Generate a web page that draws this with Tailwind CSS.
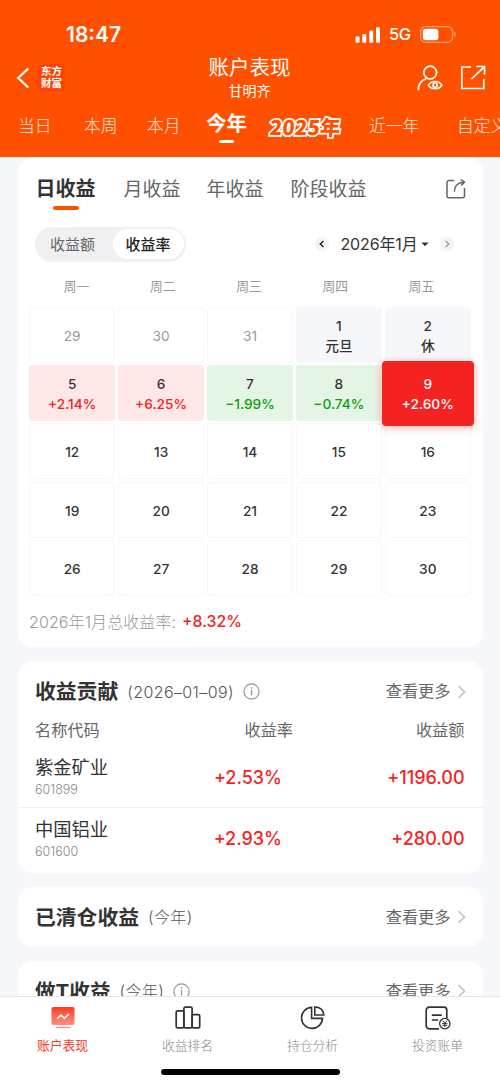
<!DOCTYPE html>
<html lang="zh-CN">
<head>
  <meta charset="UTF-8">
  <meta name="viewport" content="width=device-width, initial-scale=1.0">
  <title>账户表现</title>
  <script src="https://cdn.jsdelivr.net/npm/@tailwindcss/browser@4"></script>
</head>
<body class="w-[500px] h-[1084px] overflow-hidden flex flex-col bg-[#f6f7fa] text-[#333] font-['Inter','Noto_Sans_CJK_SC',sans-serif]">
  <!-- Header -->
  <header class="h-[157px] shrink-0 bg-[#ff5000] text-white overflow-hidden">
    <div class="h-[52px] pt-[17px] pl-[66px] pr-[44px] flex items-center justify-between">
      <span class="text-[21px] leading-[35px] font-semibold">18:47</span>
      <div class="flex items-center">
        <svg class="w-[26px] h-[16px]" viewBox="0 0 26 16" fill="#fff">
          <rect x="0.5" y="9.5" width="4" height="6.2" rx="1"/>
          <rect x="7.3" y="7" width="4" height="8.7" rx="1"/>
          <rect x="14.2" y="3.5" width="4" height="12.2" rx="1"/>
          <rect x="21" y="0.3" width="4" height="15.4" rx="1"/>
        </svg>
        <span class="ml-[8px] w-[24px] text-[16.5px] leading-[35px] font-medium tracking-[-0.5px]">5G</span>
        <svg class="ml-[7px] w-[36px] h-[17px]" viewBox="0 0 36 17">
          <rect x="0.6" y="0.6" width="32" height="15.8" rx="5" fill="none" stroke="#ff9c70" stroke-width="1.2"/>
          <rect x="2.8" y="2.8" width="15.6" height="11.4" rx="3" fill="#fff"/>
          <path d="M34.2 5.8c1.8.8 1.8 4.6 0 5.4z" fill="#ff9c70"/>
        </svg>
      </div>
    </div>
    <div class="h-[51px] pl-[16px] pr-[14px] grid grid-cols-[1fr_100px_1fr] items-center">
      <div class="flex items-center">
        <svg class="w-[14px] h-[22px]" viewBox="0 0 14 22" fill="none" stroke="#fff" stroke-width="2.2"><path d="M12.2 1.5L2.2 11l10 9.5"/></svg>
        <div class="ml-[8px] w-[27px] h-[27px] rounded-[6px] bg-[#ff4206] flex flex-col items-center justify-center text-[10.5px] leading-[11.5px] font-bold">
          <span>东方</span>
          <span>财富</span>
        </div>
      </div>
      <div class="-ml-[3px] text-center whitespace-nowrap">
        <h1 class="text-[20.5px] leading-[26px] font-normal">账户表现</h1>
        <p class="text-[14px] leading-[20px]">甘明齐</p>
      </div>
      <div class="flex items-center justify-end">
        <svg class="w-[26px] h-[26px]" viewBox="0 0 26 26" fill="none" stroke="#fff" stroke-width="1.7">
          <circle cx="13.2" cy="7.6" r="6.4"/>
          <path d="M1.2 25.3c0-6 3.2-10 8-11.6"/>
          <path d="M11.3 20.2c3.4-5 10.3-5 13.6 0c-3.3 4.7-10.2 4.7-13.6 0z" stroke-width="1.5"/>
          <circle cx="18.1" cy="20.1" r="2.1" stroke-width="1.5"/>
        </svg>
        <svg class="ml-[17px] w-[26px] h-[25px]" viewBox="0 0 26 25" fill="none" stroke="#fff" stroke-width="1.7">
          <path d="M11 2H1.8v21.5h22V14"/>
          <path d="M16.2 1.5h8.3v8.2M24.2 1.8L11.5 14"/>
        </svg>
      </div>
    </div>
    <nav class="h-[48px] pl-[18px] flex items-center whitespace-nowrap text-[16.8px] font-light text-white/85">
      <span class="w-[66px] shrink-0">当日</span>
      <span class="w-[63px] shrink-0">本周</span>
      <span class="w-[59px] shrink-0">本月</span>
      <div class="w-[41px] shrink-0 flex flex-col items-center">
        <span class="text-[20.5px] leading-[26px] font-bold text-white">今年</span>
        <span class="mt-[3px] w-[15px] h-[3px] rounded-full bg-white"></span>
      </div>
      <div class="ml-[23px] w-[99px] shrink-0">
        <span class="inline-block -skew-x-6 font-['Noto_Sans_CJK_SC',sans-serif] text-[20px] font-black tracking-[0.4px] text-[#ff5000] [-webkit-text-stroke:3.5px_#fff] [paint-order:stroke_fill]">2025年</span>
      </div>
      <span class="w-[88px] shrink-0">近一年</span>
      <span class="shrink-0">自定义</span>
    </nav>
  </header>

  <!-- Cards -->
  <main class="h-[839px] shrink-0 overflow-hidden px-[17.5px] flex flex-col gap-[14px]">
    <section class="h-[490px] shrink-0 bg-white rounded-[15px]">
      <div class="h-[53px] pt-[17px] pl-[18px] pr-[17px] flex items-start text-[19px] leading-[31px] text-[#666] whitespace-nowrap">
        <div class="w-[60px] flex flex-col items-center">
          <span class="text-[20px] font-bold text-[#333]">日收益</span>
          <span class="mt-px w-[26px] h-[4px] rounded-full bg-[#ff5000]"></span>
        </div>
        <span class="ml-[28px]">月收益</span>
        <span class="ml-[26px]">年收益</span>
        <span class="ml-[27px]">阶段收益</span>
        <svg class="ml-auto mt-[5px] w-[20px] h-[20px]" viewBox="0 0 20 20" fill="none" stroke="#666" stroke-width="1.5">
          <path d="M8 1.5H3a2 2 0 0 0-2 2v13.2a2 2 0 0 0 2 2h13.5a2 2 0 0 0 2-2V9"/>
          <path d="M8.3 12.8C8.5 7 11.5 3.4 18 3.2M14.6.6l3.9 2.6-3.3 3.2"/>
        </svg>
      </div>

      <div class="h-[68px] pl-[17.5px] pr-[29px] flex items-center justify-between">
        <div class="w-[151px] h-[35px] rounded-full bg-[#f0f0f2] p-[2.5px] flex text-[15px] leading-[31px] text-center">
          <span class="w-[75px] pr-[5px] text-[#666]">收益额</span>
          <span class="w-[71px] h-[30px] rounded-full bg-white font-medium text-[#222]">收益率</span>
        </div>
        <div class="flex items-center">
          <svg class="w-[14px] h-[14px]" viewBox="0 0 14 14"><circle cx="7" cy="7" r="7" fill="#f1f2f4"/><path d="M8.5 4L5.3 7l3.2 3" fill="none" stroke="#222" stroke-width="1.4"/></svg>
          <span class="ml-[12px] w-[77px] text-[16px] leading-[24px] tracking-[-0.15px] whitespace-nowrap">2026年1月</span>
          <svg class="ml-[3px] w-[8px] h-[5px]" viewBox="0 0 8 5"><path d="M.4.5h7.2L4 4.2z" fill="#333"/></svg>
          <svg class="ml-[11px] w-[14px] h-[14px]" viewBox="0 0 14 14"><circle cx="7" cy="7" r="7" fill="#f1f2f4"/><path d="M5.6 4l3.2 3-3.2 3" fill="none" stroke="#999" stroke-width="1.3"/></svg>
        </div>
      </div>

      <div class="h-[29px] pl-[16px] pr-[18px] grid grid-cols-5 text-center text-[12.8px] leading-[17px] text-[#999]">
        <span>周一</span><span>周二</span><span>周三</span><span>周四</span><span>周五</span>
      </div>

      <!-- Calendar -->
      <div class="ml-[11.5px] w-[442px] grid grid-cols-5 auto-rows-[56px] gap-x-[2.5px] gap-y-[2.2px] text-center text-[13.7px] leading-[20px] font-medium *:pt-[2px]">
        <div class="rounded-[4px] border border-[#f7f7f8] text-[#999] font-normal flex items-center justify-center">29</div>
        <div class="rounded-[4px] border border-[#f7f7f8] text-[#999] font-normal flex items-center justify-center">30</div>
        <div class="rounded-[4px] border border-[#f7f7f8] text-[#999] font-normal flex items-center justify-center">31</div>
        <div class="rounded-[4px] bg-[#f6f7fa] flex flex-col items-center justify-center"><span>1</span><span>元旦</span></div>
        <div class="rounded-[4px] bg-[#f6f7fa] flex flex-col items-center justify-center"><span>2</span><span>休</span></div>

        <div class="rounded-[3px] bg-[#fde7e7] flex flex-col items-center justify-center"><span>5</span><span class="text-[#f52222]">+2.14%</span></div>
        <div class="rounded-[3px] bg-[#fde7e7] flex flex-col items-center justify-center"><span>6</span><span class="text-[#f52222]">+6.25%</span></div>
        <div class="rounded-[3px] bg-[#e4f4e5] flex flex-col items-center justify-center"><span>7</span><span class="text-[#0aa00a]">−1.99%</span></div>
        <div class="rounded-[3px] bg-[#e4f4e5] flex flex-col items-center justify-center"><span>8</span><span class="text-[#0aa00a]">−0.74%</span></div>
        <div class="z-10 -mx-[2.5px] -my-[4.5px] rounded-[4px] bg-[#f52222] text-white shadow-[0_2px_8px_rgba(245,34,34,0.35)] flex flex-col items-center justify-center"><span>9</span><span>+2.60%</span></div>

        <div class="rounded-[4px] border border-[#f7f7f8] flex items-center justify-center">12</div>
        <div class="rounded-[4px] border border-[#f7f7f8] flex items-center justify-center">13</div>
        <div class="rounded-[4px] border border-[#f7f7f8] flex items-center justify-center">14</div>
        <div class="rounded-[4px] border border-[#f7f7f8] flex items-center justify-center">15</div>
        <div class="rounded-[4px] border border-[#f7f7f8] flex items-center justify-center">16</div>

        <div class="rounded-[4px] border border-[#f7f7f8] flex items-center justify-center">19</div>
        <div class="rounded-[4px] border border-[#f7f7f8] flex items-center justify-center">20</div>
        <div class="rounded-[4px] border border-[#f7f7f8] flex items-center justify-center">21</div>
        <div class="rounded-[4px] border border-[#f7f7f8] flex items-center justify-center">22</div>
        <div class="rounded-[4px] border border-[#f7f7f8] flex items-center justify-center">23</div>

        <div class="rounded-[4px] border border-[#f7f7f8] flex items-center justify-center">26</div>
        <div class="rounded-[4px] border border-[#f7f7f8] flex items-center justify-center">27</div>
        <div class="rounded-[4px] border border-[#f7f7f8] flex items-center justify-center">28</div>
        <div class="rounded-[4px] border border-[#f7f7f8] flex items-center justify-center">29</div>
        <div class="rounded-[4px] border border-[#f7f7f8] flex items-center justify-center">30</div>
      </div>

      <p class="mt-[14px] ml-[11.5px] flex text-[16px] leading-[24px] whitespace-nowrap">
        <span class="w-[153px] font-light tracking-[0.1px] text-[#999]">2026年1月总收益率:</span>
        <span class="text-[15.8px] font-medium text-[#f52222]">+8.32%</span>
      </p>
    </section>

    <section class="h-[212px] shrink-0 bg-white rounded-[15px] overflow-hidden">
      <div class="h-[60px] pt-px pl-[17.5px] pr-[17px] flex items-center whitespace-nowrap">
        <h2 class="text-[20.8px] leading-[32px] pt-px font-bold">收益贡献</h2>
        <span class="ml-[9px] w-[108px] text-[16px] font-light tracking-[0.4px] text-[#555]">(2026–01–09)</span>
        <svg class="ml-[8px] w-[17px] h-[17px]" viewBox="0 0 17 17" fill="none" stroke="#999" stroke-width="1.2"><circle cx="8.5" cy="8.5" r="7.6"/><path d="M8.5 7v5.5M8.5 4.2v1.5" stroke-width="1.4"/></svg>
        <span class="ml-auto text-[16.2px] text-[#666]">查看更多</span>
        <svg class="ml-[6px] w-[9px] h-[14px]" viewBox="0 0 9 14" fill="none" stroke="#c4c4c4" stroke-width="1.6"><path d="M1.5 1.2L7.5 7l-6 5.8"/></svg>
      </div>
      <div class="h-[23px] pl-[17.5px] pr-[18px] grid grid-cols-[147px_111px_1fr] text-[16.2px] leading-[18px] text-[#666]">
        <span>名称代码</span>
        <span class="text-right">收益率</span>
        <span class="text-right">收益额</span>
      </div>
      <div class="h-[64px] pl-[17.5px] pr-[18px] pt-[2px] grid grid-cols-[147px_100px_1fr] items-center border-b border-[#f0f0f0]">
        <div>
          <p class="text-[18.3px] leading-[26px]">紫金矿业</p>
          <p class="pt-px text-[12.5px] leading-[18px] font-light text-[#888]">601899</p>
        </div>
        <span class="pt-px text-right text-[18px] font-medium text-[#f52222]">+2.53%</span>
        <span class="pt-px text-right text-[18px] font-medium text-[#f52222]">+1196.00</span>
      </div>
      <div class="h-[60px] pl-[17.5px] pr-[18px] grid grid-cols-[147px_100px_1fr] items-center">
        <div>
          <p class="text-[18.3px] leading-[26px]">中国铝业</p>
          <p class="pt-px text-[12.5px] leading-[18px] font-light text-[#888]">601600</p>
        </div>
        <span class="pt-px text-right text-[18px] font-medium text-[#f52222]">+2.93%</span>
        <span class="pt-px text-right text-[18px] font-medium text-[#f52222]">+280.00</span>
      </div>
    </section>

    <section class="h-[60px] shrink-0 bg-white rounded-[15px] pl-[17.5px] pr-[17px] flex items-center whitespace-nowrap">
      <h2 class="text-[20.8px] leading-[32px] pt-[2px] font-bold">已清仓收益</h2>
      <span class="ml-[9px] text-[16px] font-light tracking-[0.4px] text-[#555]">(今年)</span>
      <span class="ml-auto text-[16.2px] text-[#666]">查看更多</span>
      <svg class="ml-[6px] w-[9px] h-[14px]" viewBox="0 0 9 14" fill="none" stroke="#c4c4c4" stroke-width="1.6"><path d="M1.5 1.2L7.5 7l-6 5.8"/></svg>
    </section>

    <section class="h-[60px] shrink-0 bg-white rounded-[15px] pl-[17.5px] pr-[17px] flex items-center whitespace-nowrap">
      <h2 class="text-[20.6px] leading-[32px] pt-[2px] font-bold">做T收益</h2>
      <span class="ml-[9px] text-[16px] font-light tracking-[0.4px] text-[#555]">(今年)</span>
      <svg class="ml-[9px] w-[17px] h-[17px]" viewBox="0 0 17 17" fill="none" stroke="#999" stroke-width="1.2"><circle cx="8.5" cy="8.5" r="7.6"/><path d="M8.5 7v5.5M8.5 4.2v1.5" stroke-width="1.4"/></svg>
      <span class="ml-auto text-[16.2px] text-[#666]">查看更多</span>
      <svg class="ml-[6px] w-[9px] h-[14px]" viewBox="0 0 9 14" fill="none" stroke="#c4c4c4" stroke-width="1.6"><path d="M1.5 1.2L7.5 7l-6 5.8"/></svg>
    </section>
  </main>

  <!-- Bottom tabs -->
  <footer class="h-[88px] shrink-0 bg-white border-t border-[#e6e6e6] flex flex-col">
    <nav class="h-[72px] grid grid-cols-4 text-[12.8px] leading-[18px] font-light text-[#888]">
      <div class="pt-[9px] flex flex-col items-center text-[#ff3c1e] font-normal">
        <svg class="w-[26px] h-[24px]" viewBox="0 0 26 24">
          <defs><linearGradient id="g" x1="0" y1="0" x2="0" y2="1"><stop offset="0" stop-color="#ff3a22"/><stop offset="1" stop-color="#ff9080"/></linearGradient></defs>
          <rect x="1.5" y="1" width="23" height="18" rx="2" fill="url(#g)"/>
          <path d="M7 12.6l4-3.6 3.3 3.3 4.6-4.4" fill="none" stroke="#fff" stroke-width="1.6"/>
          <path d="M6 21.5h14" stroke="#ff9080" stroke-width="1.2"/>
        </svg>
        <span class="mt-[7px]">账户表现</span>
      </div>
      <div class="pt-[9px] flex flex-col items-center">
        <svg class="w-[26px] h-[24px]" viewBox="0 0 26 24" fill="none" stroke="#333" stroke-width="1.7">
          <rect x="1.2" y="4.8" width="7.7" height="17" rx="1.4"/>
          <rect x="8.9" y="1.2" width="8.2" height="20.6" rx="1.4"/>
          <rect x="17.1" y="8.7" width="7.6" height="13.1" rx="1.4"/>
        </svg>
        <span class="mt-[7px]">收益排名</span>
      </div>
      <div class="pt-[9px] flex flex-col items-center">
        <svg class="w-[26px] h-[24px]" viewBox="0 0 26 24" fill="none" stroke="#333" stroke-width="1.6">
          <path d="M11.6 1.4A10.5 10.5 0 1 0 22.5 12.4H11.6z"/>
          <path d="M14.8 1v8h9c0-4.8-3.8-8-9-8z"/>
        </svg>
        <span class="mt-[7px]">持仓分析</span>
      </div>
      <div class="pt-[9px] flex flex-col items-center">
        <svg class="w-[26px] h-[24px]" viewBox="0 0 26 24" fill="none" stroke="#333" stroke-width="1.7">
          <path d="M14 22.8H4.2a3 3 0 0 1-3-3V4.2a3 3 0 0 1 3-3h14.6a3 3 0 0 1 3 3v8.3M6.8 9.2h10M6.8 14h6.5"/>
          <circle cx="19.8" cy="17.6" r="5.2" stroke-width="1.3"/>
          <path d="M17.5 14.5l2.3 2.6 2.3-2.6M19.8 17v4M17.2 17.4h5.2M17.2 19.2h5.2" stroke-width="1"/>
        </svg>
        <span class="mt-[7px]">投资账单</span>
      </div>
    </nav>
    <div class="mx-auto w-[179px] h-[6px] rounded-full bg-black"></div>
  </footer>
</body>
</html>
